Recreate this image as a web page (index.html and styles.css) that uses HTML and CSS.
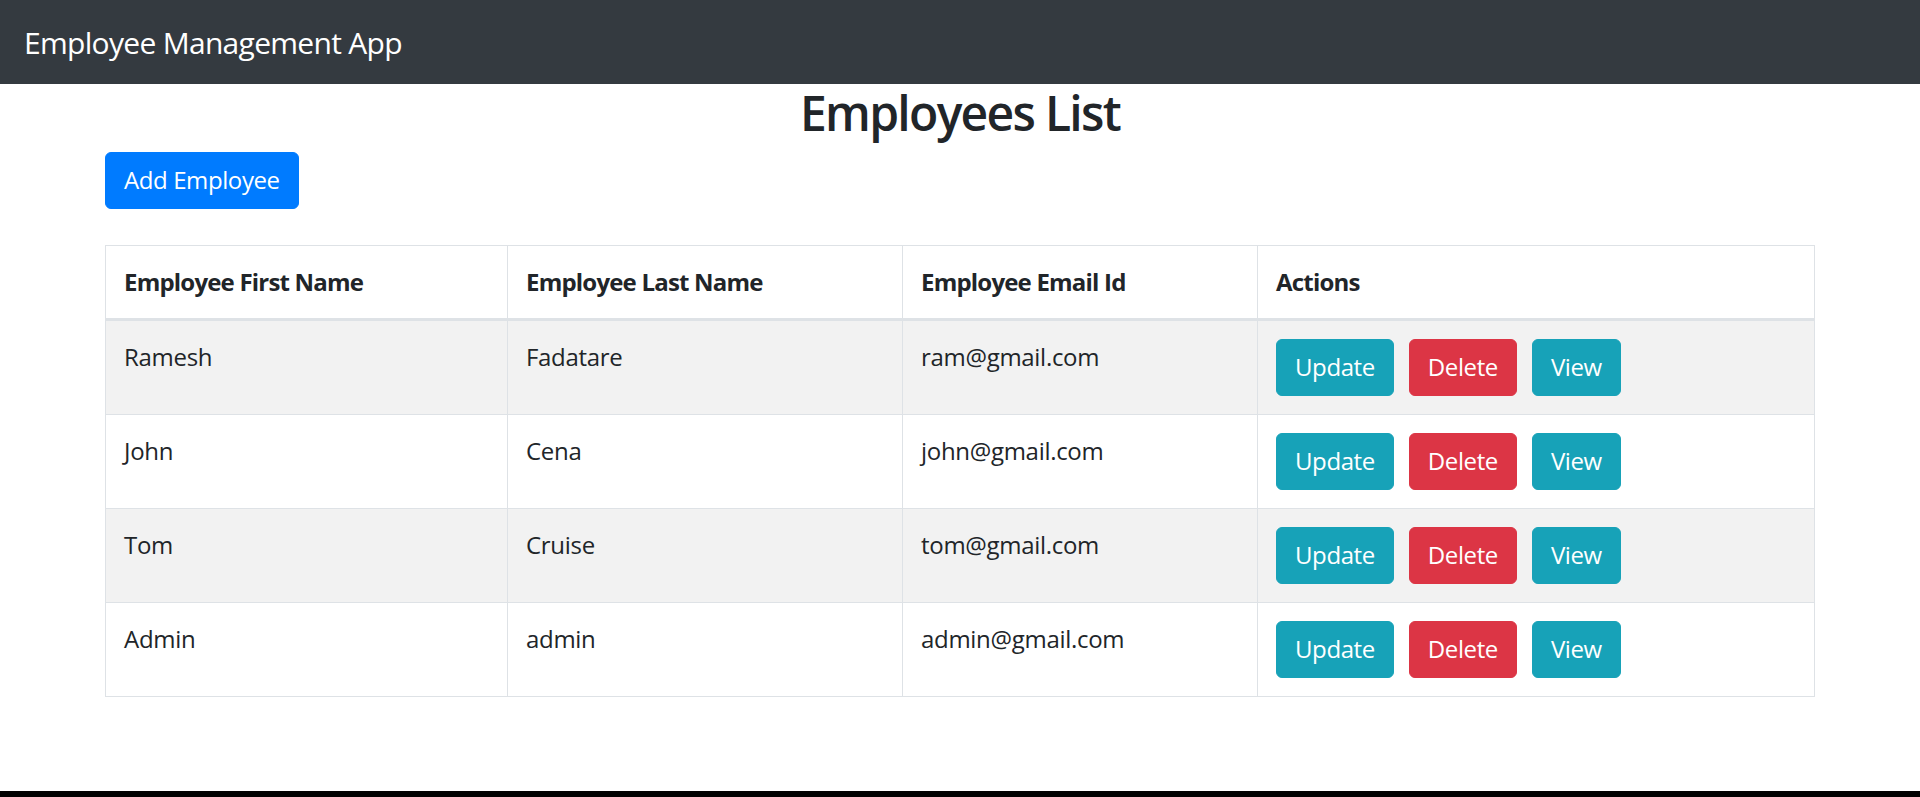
FILE: index.html
```html
<!DOCTYPE html>
<html lang="en">
<head>
<meta charset="utf-8">
<title>Employee Management App</title>
<link rel="stylesheet" href="styles.css">
</head>
<body>
<div class="page">
  <header class="navbar">
    <a class="brand" href="#">Employee Management App</a>
  </header>
  <main class="container">
    <h2 class="title">Employees List</h2>
    <div class="toolbar">
      <button class="btn btn-primary">Add Employee</button>
    </div>
    <table class="table">
      <colgroup>
        <col class="col-first">
        <col class="col-last">
        <col class="col-email">
        <col class="col-actions">
      </colgroup>
      <thead>
        <tr>
          <th>Employee First Name</th>
          <th>Employee Last Name</th>
          <th>Employee Email Id</th>
          <th>Actions</th>
        </tr>
      </thead>
      <tbody>
        <tr>
          <td>Ramesh</td>
          <td>Fadatare</td>
          <td>ram@gmail.com</td>
          <td><div class="actions"><button class="btn btn-info">Update</button><button class="btn btn-danger">Delete</button><button class="btn btn-info">View</button></div></td>
        </tr>
        <tr>
          <td>John</td>
          <td>Cena</td>
          <td>john@gmail.com</td>
          <td><div class="actions"><button class="btn btn-info">Update</button><button class="btn btn-danger">Delete</button><button class="btn btn-info">View</button></div></td>
        </tr>
        <tr>
          <td>Tom</td>
          <td>Cruise</td>
          <td>tom@gmail.com</td>
          <td><div class="actions"><button class="btn btn-info">Update</button><button class="btn btn-danger">Delete</button><button class="btn btn-info">View</button></div></td>
        </tr>
        <tr>
          <td>Admin</td>
          <td>admin</td>
          <td>admin@gmail.com</td>
          <td><div class="actions"><button class="btn btn-info">Update</button><button class="btn btn-danger">Delete</button><button class="btn btn-info">View</button></div></td>
        </tr>
      </tbody>
    </table>
  </main>
  <footer class="bottom-bar"></footer>
</div>
</body>
</html>
```
FILE: styles.css
```css
* { box-sizing: border-box; }
html, body { margin: 0; padding: 0; }
body {
  font-family: "Open Sans", "Noto Sans", "Liberation Sans", sans-serif;
  font-size: 24px;
  line-height: 1.5;
  color: #212529;
  background: #fff;
}
.page {
  min-height: 100vh;
  display: flex;
  flex-direction: column;
}
.navbar {
  background: #343a40;
  padding: 12px 24px;
  display: flex;
  align-items: center;
}
.brand {
  color: #fff;
  text-decoration: none;
  font-size: 30px;
  line-height: 45px;
  padding: 7.5px 0;
  letter-spacing: -0.7px;
}
.container {
  width: 1710px;
  margin: 0 auto;
}
.title {
  font-size: 48px;
  font-weight: 600;
  line-height: 1.2;
  margin: 0 0 10px;
  text-align: center;
  letter-spacing: -1.7px;
}
.toolbar {
  display: flex;
  margin-bottom: 36px;
}
.btn {
  font-family: inherit;
  font-size: 24px;
  line-height: 36px;
  padding: 9.5px 18px;
  border: 1px solid transparent;
  border-radius: 6px;
  color: #fff;
  cursor: pointer;
  letter-spacing: -0.4px;
}
.btn-primary { background: #007bff; border-color: #007bff; }
.btn-info { background: #17a2b8; border-color: #17a2b8; }
.btn-danger { background: #dc3545; border-color: #dc3545; }
.table {
  width: 1710px;
  border-collapse: collapse;
  table-layout: fixed;
  border: 1px solid #dee2e6;
  margin-bottom: 24px;
}
.col-first { width: 402px; }
.col-last { width: 395px; }
.col-email { width: 355px; }
.table th, .table td {
  padding: 18px;
  border: 1px solid #dee2e6;
  vertical-align: top;
  text-align: left;
  letter-spacing: -0.3px;
}
.table thead th {
  vertical-align: bottom;
  border-bottom: 3px solid #dee2e6;
  font-weight: 700;
  letter-spacing: -0.8px;
}
.table tbody tr:nth-child(odd) { background: #f2f2f2; }
.actions {
  display: flex;
  gap: 15px;
}
.bottom-bar {
  margin-top: auto;
  height: 6px;
  background: #000;
}
```
